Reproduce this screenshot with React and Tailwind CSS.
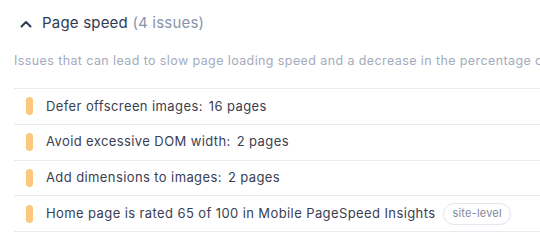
import React from 'react';

const ISSUES = [
  { label: 'Defer offscreen images:', count: '16 pages' },
  { label: 'Avoid excessive DOM width:', count: '2 pages' },
  { label: 'Add dimensions to images:', count: '2 pages' },
  { label: 'Home page is rated 65 of 100 in Mobile PageSpeed Insights', badge: 'site-level' },
];

export default function App() {
  return (
    <div className="w-[540px] h-[246px] overflow-hidden bg-white font-['Inter',sans-serif]">
      <div className="pl-[14px]">
        {/* Header */}
        <div className="flex items-center h-[46px] pl-[6px]">
          <svg width="12" height="8" viewBox="0 0 12 8" className="mt-[1px]">
            <path d="M1.5 6.5 L6 2 L10.5 6.5" fill="none" stroke="#2b3a55" strokeWidth="2" strokeLinecap="round" strokeLinejoin="round" />
          </svg>
          <div className="ml-[10px] text-[15px] tracking-[0.2px] text-[#2f3b55]">
            Page speed <span className="text-[#8a93a8]">(4 issues)</span>
          </div>
        </div>

        {/* Description */}
        <div className="whitespace-nowrap text-[12.5px] tracking-[0.4px] text-[#a3abbe] mt-[3px] h-[24px] leading-[24px]">
          Issues that can lead to slow page loading speed and a decrease in the percentage of
        </div>

        {/* Issues */}
        <div className="mt-[15px] border-t border-[#e8eaef]">
          {ISSUES.map((it) => (
            <div key={it.label} className="flex items-center h-[35.75px] border-b border-[#e8eaef] pl-[12px]">
              <div className="w-[7px] h-[18px] rounded-full bg-[#fdc77c]" />
              <div className="ml-[13px] text-[13px] tracking-[0.4px] text-[#3a4053] whitespace-nowrap">
                {it.label}
                {it.count && <span className="ml-[6px]">{it.count}</span>}
              </div>
              {it.badge && (
                <span className="ml-[8px] px-[8px] h-[22px] flex items-center rounded-full border border-[#e3e6ec] text-[11px] tracking-[0.2px] text-[#7d879c]">
                  {it.badge}
                </span>
              )}
            </div>
          ))}
        </div>
      </div>
    </div>
  );
}
